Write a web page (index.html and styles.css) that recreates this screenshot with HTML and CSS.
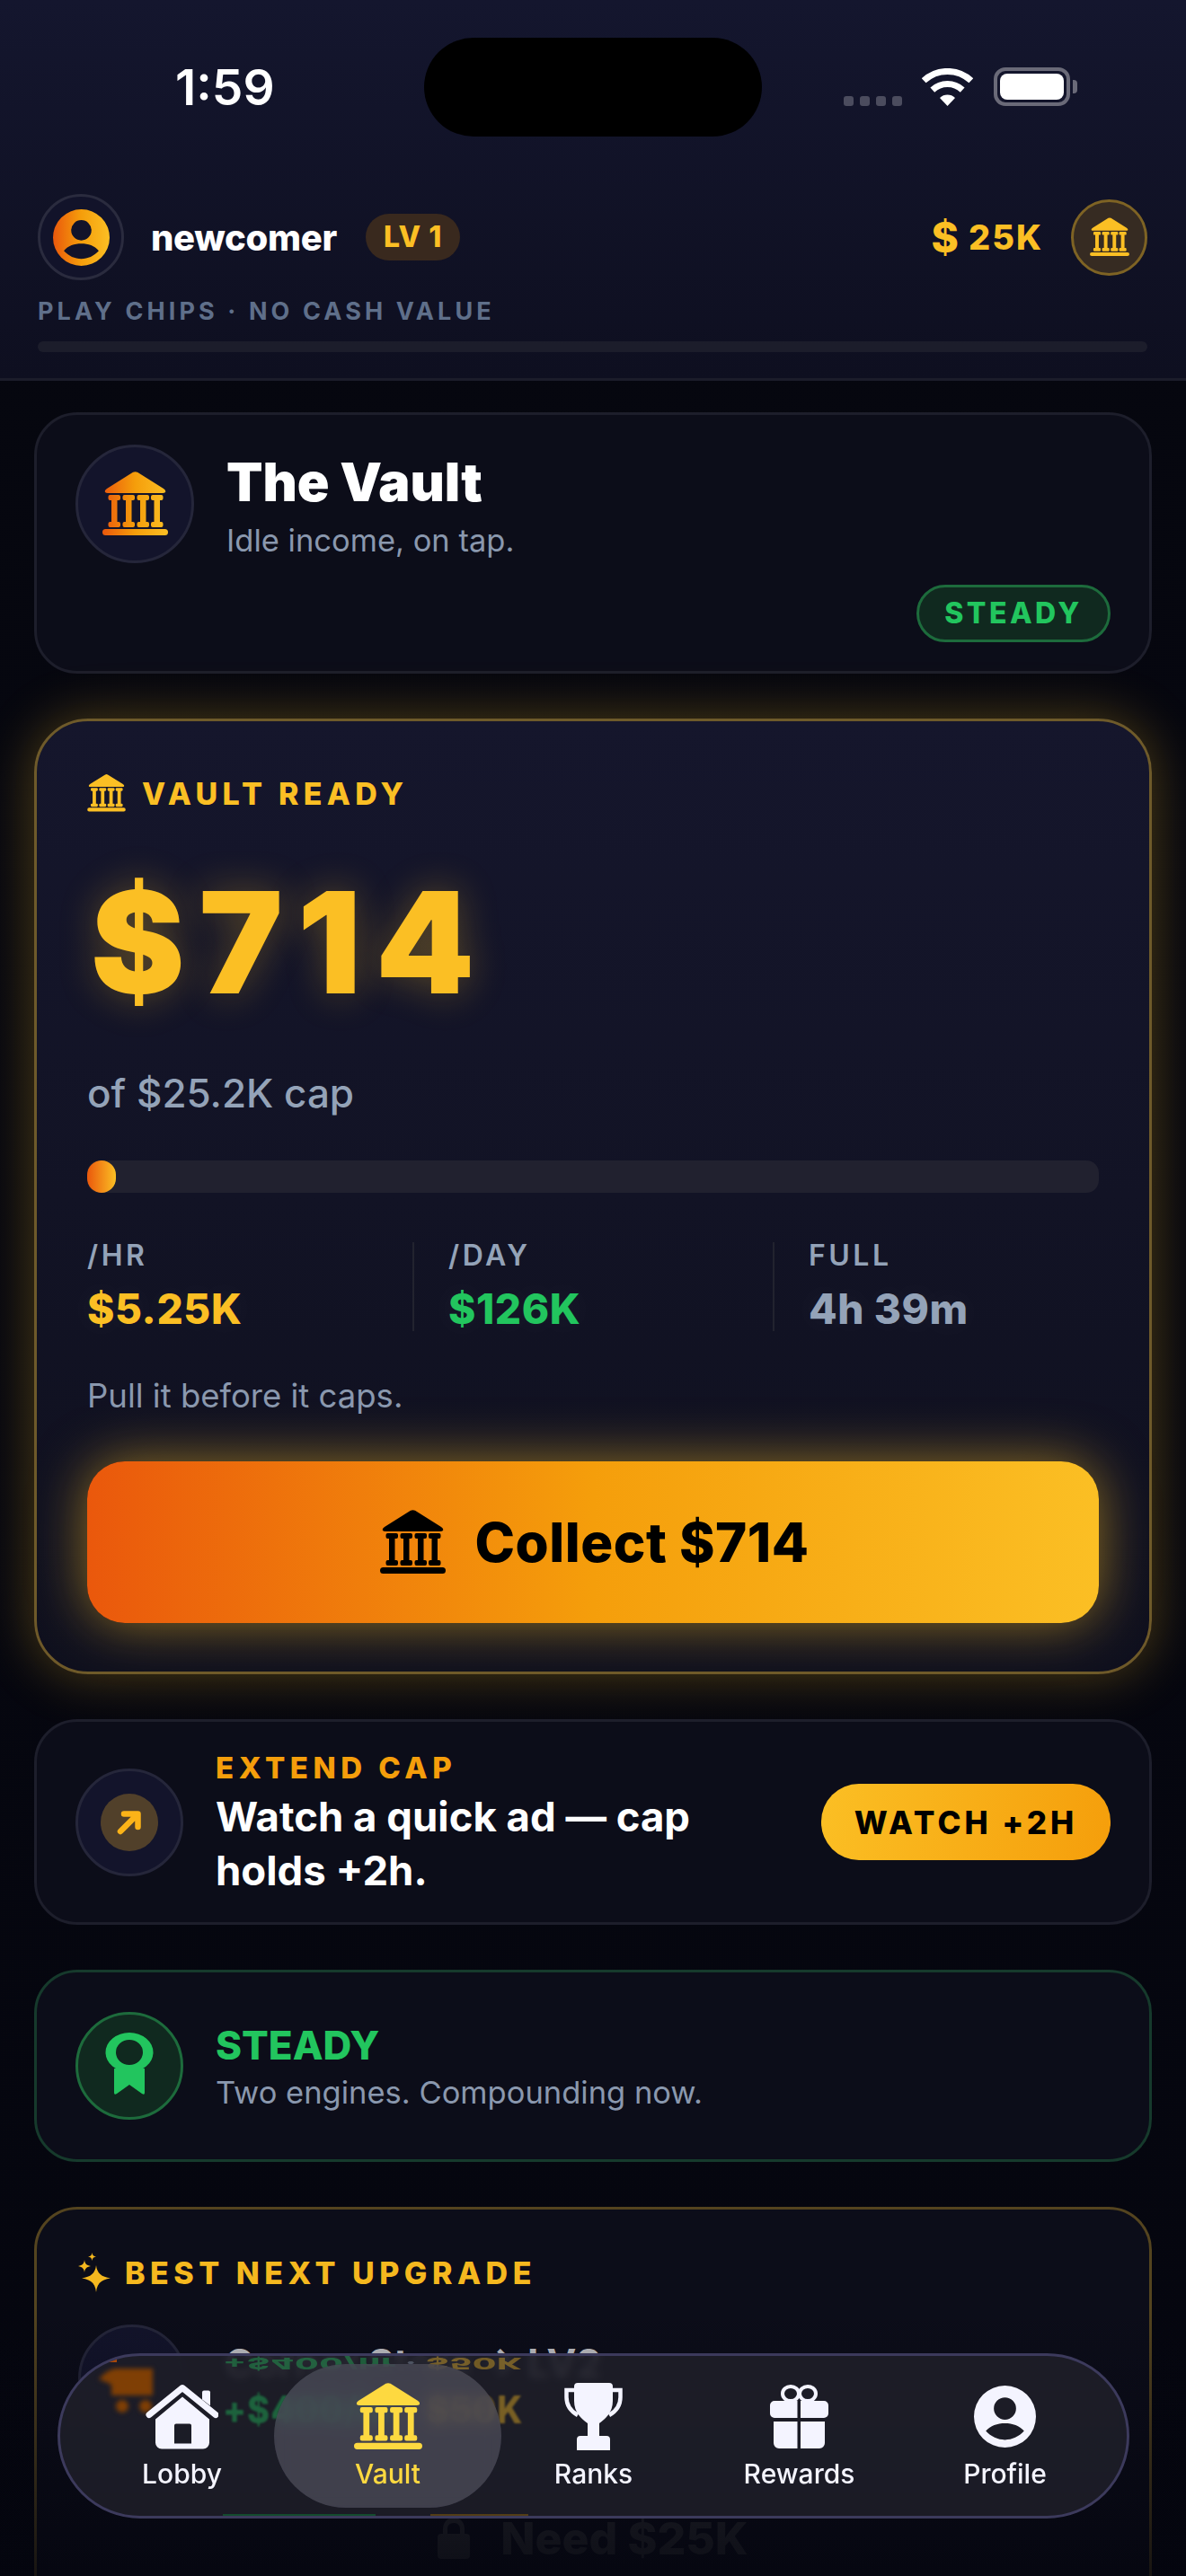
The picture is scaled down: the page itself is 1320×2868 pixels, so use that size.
FILE: index.html
```html
<!DOCTYPE html>
<html lang="en">
<head>
    <meta charset="UTF-8">
    <meta name="viewport" content="width=device-width, initial-scale=1.0">
    <title>The Vault</title>
    <link rel="stylesheet" href="styles.css">
</head>
<body>
    <svg class="defs" width="0" height="0" aria-hidden="true">
        <defs>
            <linearGradient id="amber" x1="0" y1="0" x2="1" y2="0">
                <stop offset="0" stop-color="#ea580c"/>
                <stop offset="0.5" stop-color="#f59e0b"/>
                <stop offset="1" stop-color="#fbbf24"/>
            </linearGradient>
            <symbol id="bank" viewBox="0 0 73 72">
                <path d="M34 .8Q36.5-.4 39 .8L68 19Q71 21 70 23 69 24 67 24H6Q4 24 3 23 2 21 5 19ZM6.5 28a2 2 0 0 1 2-2h9.5a2 2 0 0 1 2 2v2a2 2 0 0 1-2 2h-1.5v24h1.5a2 2 0 0 1 2 2v2a2 2 0 0 1-2 2h-9.5a2 2 0 0 1-2-2v-2a2 2 0 0 1 2-2h1.5v-24h-1.5a2 2 0 0 1-2-2zM22.5 28a2 2 0 0 1 2-2h9.5a2 2 0 0 1 2 2v2a2 2 0 0 1-2 2h-1.5v24h1.5a2 2 0 0 1 2 2v2a2 2 0 0 1-2 2h-9.5a2 2 0 0 1-2-2v-2a2 2 0 0 1 2-2h1.5v-24h-1.5a2 2 0 0 1-2-2zM38.5 28a2 2 0 0 1 2-2h9.5a2 2 0 0 1 2 2v2a2 2 0 0 1-2 2h-1.5v24h1.5a2 2 0 0 1 2 2v2a2 2 0 0 1-2 2h-9.5a2 2 0 0 1-2-2v-2a2 2 0 0 1 2-2h1.5v-24h-1.5a2 2 0 0 1-2-2zM54 28a2 2 0 0 1 2-2h9.5a2 2 0 0 1 2 2v2a2 2 0 0 1-2 2h-1.5v24h1.5a2 2 0 0 1 2 2v2a2 2 0 0 1-2 2h-9.5a2 2 0 0 1-2-2v-2a2 2 0 0 1 2-2h1.5v-24h-1.5a2 2 0 0 1-2-2zM3.5 64H69.5a3.5 3.5 0 0 1 0 7H3.5a3.5 3.5 0 0 1 0-7z"/>
            </symbol>
            <symbol id="person" viewBox="0 0 24 24">
                <path fill-rule="evenodd" d="M12 0a12 12 0 1 1 0 24 12 12 0 0 1 0-24zM12 4.6a4.3 4.3 0 1 0 0 8.6 4.3 4.3 0 0 0 0-8.6zM4.6 17.6C6.6 19.8 9.2 21 12 21s5.4-1.2 7.4-3.4C17.6 15.5 15 14.6 12 14.6s-5.600.9-7.400 3z"/>
            </symbol>
        </defs>
    </svg>

    <div class="page">
        <header class="top">
            <div class="status">
                <div class="status-left"><span class="time">1:59</span></div>
                <div class="island"></div>
                <div class="status-right">
                    <div class="signal"><i></i><i></i><i></i><i></i></div>
                    <svg class="wifi" viewBox="0 0 57 42" fill="none">
                        <path d="M2.200 13.800A38.500 38.500 0 0 1 54.800 13.800" stroke="#fff" stroke-width="7"/>
                        <path d="M11.800 24.100A24.500 24.500 0 0 1 45.200 24.100" stroke="#fff" stroke-width="7"/>
                        <path d="M28.500 42L20 32.900A12.500 12.500 0 0 1 37 32.900Z" fill="#fff"/>
                    </svg>
                    <div class="battery"><div class="battery-fill"></div></div>
                    <div class="battery-nub"></div>
                </div>
            </div>

            <div class="player-row">
                <div class="avatar">
                    <svg width="63" height="63" fill="url(#amber)"><use href="#person"/></svg>
                </div>
                <span class="player-name">newcomer</span>
                <span class="level">LV 1</span>
                <div class="balance"><span class="balance-sign">$</span><span class="balance-num">25K</span></div>
                <div class="coin">
                    <svg width="44" height="44" fill="#fbbf24"><use href="#bank"/></svg>
                </div>
            </div>
            <p class="disclaimer">PLAY CHIPS · NO CASH VALUE</p>
            <div class="xp-bar"></div>
        </header>

        <main class="feed">
            <section class="card title-card">
                <div class="title-row">
                    <div class="disc disc-large">
                        <svg width="73" height="72" fill="url(#amber)"><use href="#bank"/></svg>
                    </div>
                    <div class="title-text">
                        <h1>The Vault</h1>
                        <p>Idle income, on tap.</p>
                    </div>
                </div>
                <span class="tag-steady">STEADY</span>
            </section>

            <section class="vault-card">
                <div class="vault-label">
                    <svg width="43" height="42" fill="#fbbf24"><use href="#bank"/></svg>
                    <span>VAULT READY</span>
                </div>
                <div class="amount">$714</div>
                <div class="cap">of $25.2K cap</div>
                <div class="track"><div class="track-fill" style="width: 2.8%"></div></div>
                <div class="stats">
                    <div class="stat">
                        <div class="stat-label">/HR</div>
                        <div class="stat-value gold">$5.25K</div>
                    </div>
                    <div class="stat">
                        <div class="stat-label">/DAY</div>
                        <div class="stat-value green">$126K</div>
                    </div>
                    <div class="stat">
                        <div class="stat-label">FULL</div>
                        <div class="stat-value slate">4h 39m</div>
                    </div>
                </div>
                <p class="hint">Pull it before it caps.</p>
                <button class="collect">
                    <svg width="73" height="72" fill="#000"><use href="#bank"/></svg>
                    <span>Collect $714</span>
                </button>
            </section>

            <section class="card extend-card">
                <div class="disc">
                    <div class="arrow-dot">
                        <svg width="28" height="28" viewBox="0 0 28 28" fill="none" stroke="#fbb318" stroke-width="6.500" stroke-linecap="round" stroke-linejoin="round">
                            <path d="M4 24L22 6M8 4.500H23.500V19"/>
                        </svg>
                    </div>
                </div>
                <div class="extend-text">
                    <div class="extend-label">EXTEND CAP</div>
                    <div class="extend-copy">Watch a quick ad — cap holds +2h.</div>
                </div>
                <button class="watch">WATCH +2H</button>
            </section>

            <section class="card steady-card">
                <div class="disc disc-green">
                    <svg class="rosette" width="54" height="70" viewBox="0 0 54 70" fill="#22c55e">
                        <path fill-rule="evenodd" d="M27 0a26.500 22 0 1 1 0 44 26.500 22 0 0 1 0-44zM27 8a15 14 0 1 0 0 28 15 14 0 0 0 0-28z"/>
                        <path d="M10 40H44V67Q44 70 41 68L27 58 13 68Q10 70 10 67Z"/>
                    </svg>
                </div>
                <div class="steady-text">
                    <div class="steady-title">STEADY</div>
                    <div class="steady-sub">Two engines. Compounding now.</div>
                </div>
            </section>

            <section class="card best-card">
                <div class="best-label">
                    <svg width="36" height="44" viewBox="0 0 36 44" fill="#f5b81f">
                        <path d="M20 14C21 23 26 27 36 28.500 26 30 21 34 20 44 19 34 14 30 4 28.500 14 27 19 23 20 14Z"/>
                        <path d="M7 8C7.500 12 9 14 14 15 9 16 7.500 18 7 22 6.500 18 5 16 0 15 5 14 6.500 12 7 8Z"/>
                        <path d="M15.500 0C16 3 17 4 20 4.500 17 5 16 6 15.500 9 15 6 14 5 11 4.500 14 4 15 3 15.500 0Z"/>
                    </svg>
                    <span>BEST NEXT UPGRADE</span>
                </div>
                <div class="upgrade-row">
                    <div class="disc"></div>
                    <div class="upgrade-text">
                        <div class="upgrade-name">Corner Store → LV2</div>
                    </div>
                </div>
                <div class="locked">
                    <svg width="36" height="46" viewBox="0 0 36 46" fill="#2a2b31">
                        <path fill-rule="evenodd" d="M18 0C26 0 30 6 30 13V18H32Q36 18 36 22V42Q36 46 32 46H4Q0 46 0 42V22Q0 18 4 18H6V13C6 6 10 0 18 0ZM18 6C13 6 11 9 11 13V18H25V13C25 9 23 6 18 6Z"/>
                    </svg>
                    <span>Need $25K</span>
                </div>
            </section>
        </main>

        <div class="bottom-fade"></div>

        <nav class="tabbar">
            <!-- what the glass bends and blurs from the card below -->
            <i class="lens-chip"></i>
            <svg class="lens-cart" width="66" height="56" viewBox="0 0 66 56" fill="#7f3f05">
                <path d="M0 16Q8 6 18 4H60V34H14V22Q6 18 0 16Z"/>
                <circle cx="26" cy="46" r="7"/>
                <circle cx="52" cy="46" r="7"/>
            </svg>
            <div class="lens-text"><span class="green">+$400/hr</span> <span class="slate">·</span> <span class="gold">$50K</span></div>
            <div class="mirror"><span class="green">+$400/hr</span> <span class="slate">·</span> <span class="gold">$50K</span></div>
            <i class="lens-edge"></i>

            <a class="tab">
                <svg width="81" height="72" viewBox="0 0 81 72" fill="#f4f4ff">
                    <path fill-rule="evenodd" d="M41 14L71 39V65A7 7 0 0 1 64 72H18A7 7 0 0 1 11 65V39ZM32 46V66H51V46Q51 44 49 44H34Q32 44 32 46Z"/>
                    <path d="M63 9Q63 7 65 7H70Q72 7 72 9V24L63 17Z"/>
                    <path d="M4 34L41 4 78 34" fill="none" stroke="#f4f4ff" stroke-width="7" stroke-linecap="round" stroke-linejoin="round"/>
                </svg>
                <span>Lobby</span>
            </a>
            <a class="tab tab-active">
                <svg width="76" height="74" fill="#fdd940"><use href="#bank"/></svg>
                <span>Vault</span>
            </a>
            <a class="tab">
                <svg width="65" height="75" viewBox="0 0 65 75" fill="#f4f4ff">
                    <path d="M15 0H50A4 4 0 0 1 54 4V20C54 33 46 40 39 45V59H47A4 4 0 0 1 51 63V75H14V63A4 4 0 0 1 18 59H26V45C19 40 11 33 11 20V4A4 4 0 0 1 15 0Z"/>
                    <path d="M12 8H2.500V16C2.500 26 8 32 15 36M53 8H62.500V16C62.500 26 57 32 50 36" fill="none" stroke="#f4f4ff" stroke-width="4.500"/>
                </svg>
                <span>Ranks</span>
            </a>
            <a class="tab">
                <svg width="65" height="71" viewBox="0 0 65 71" fill="#f4f4ff">
                    <ellipse cx="23" cy="10" rx="9" ry="8" fill="none" stroke="#f4f4ff" stroke-width="4"/>
                    <ellipse cx="42" cy="10" rx="9" ry="8" fill="none" stroke="#f4f4ff" stroke-width="4"/>
                    <path d="M5 18H30.500V37H5A5 5 0 0 1 0 32V23A5 5 0 0 1 5 18ZM34 18H60A5 5 0 0 1 65 23V32A5 5 0 0 1 60 37H34Z"/>
                    <path d="M4 41H30.500V71H10A6 6 0 0 1 4 65ZM34 41H61V65A6 6 0 0 1 55 71H34Z"/>
                </svg>
                <span>Rewards</span>
            </a>
            <a class="tab">
                <svg width="69" height="69" fill="#f4f4ff"><use href="#person"/></svg>
                <span>Profile</span>
            </a>
        </nav>
    </div>
</body>
</html>
```

FILE: styles.css
```css
* {
    box-sizing: border-box;
}

body {
    margin: 0;
    background-color: #05060f;
    color: #fff;
    font-family: Inter, "Liberation Sans", sans-serif;
}

.defs {
    position: absolute;
}

.page {
    position: relative;
    width: 1320px;
    height: 2868px;
    overflow: hidden;
    background: linear-gradient(#06070f, #05060f);
}

.green { color: #22c55e; }
.gold { color: #fbbf24; }
.slate { color: #94a3b8; }

/* top bar */
.top {
    height: 424px;
    padding-top: 42px;
    background: linear-gradient(#14162e, #0e0f20);
    border-bottom: 3px solid #1b1c2a;
}

.status {
    display: grid;
    grid-template-columns: 472px 376px 472px;
    height: 174px;
}

.status-left {
    height: 110px;
    padding-left: 195px;
    display: flex;
    align-items: center;
}

.time {
    font-size: 55px;
    font-weight: 600;
}

.island {
    height: 110px;
    background-color: #000;
    border-radius: 55px;
}

.status-right {
    display: flex;
    align-items: flex-end;
    height: 76px;
    padding-left: 91px;
}

.signal {
    display: flex;
    gap: 7px;
    margin-right: 22px;
}

.signal i {
    width: 11px;
    height: 11px;
    border-radius: 3px;
    background-color: #4b4c5e;
}

.wifi {
    width: 57px;
    height: 42px;
    margin-right: 23px;
}

.battery {
    width: 85px;
    height: 43px;
    border: 4px solid #6a6a78;
    border-radius: 13px;
    padding: 3px;
}

.battery-fill {
    height: 100%;
    background-color: #fff;
    border-radius: 8px;
}

.battery-nub {
    width: 5px;
    height: 15px;
    margin: 0 0 14px 3px;
    background-color: #6a6a78;
    border-radius: 0 4px 4px 0;
}

.player-row {
    display: flex;
    align-items: center;
    height: 96px;
    padding: 0 43px 0 42px;
}

.avatar {
    width: 96px;
    height: 96px;
    display: flex;
    align-items: center;
    justify-content: center;
    background-color: #12132a;
    border: 3px solid #2a2b3e;
    border-radius: 50%;
}

.player-name {
    margin-left: 30px;
    font-size: 40px;
    font-weight: 800;
    letter-spacing: -0.3px;
}

.level {
    margin-left: 32px;
    padding: 0 20px;
    height: 52px;
    line-height: 52px;
    border-radius: 26px;
    background-color: #39291e;
    color: #fbbf24;
    font-size: 32px;
    font-weight: 800;
    letter-spacing: 1px;
}

.balance {
    margin-left: auto;
    display: flex;
    align-items: center;
    gap: 11px;
    color: #fbbf24;
    font-weight: 800;
}

.balance-sign {
    font-size: 46px;
}

.balance-num {
    font-size: 38px;
    letter-spacing: 2px;
}

.coin {
    width: 85px;
    height: 85px;
    margin-left: 31px;
    display: flex;
    align-items: center;
    justify-content: center;
    background-color: #362b22;
    border: 3px solid #7e6324;
    border-radius: 50%;
}

.disclaimer {
    margin: 18px 0 0 42px;
    height: 34px;
    line-height: 34px;
    font-size: 27px;
    font-weight: 700;
    letter-spacing: 4.100px;
    color: #5f6f8a;
}

.xp-bar {
    margin: 16px 43px 0 42px;
    height: 12px;
    border-radius: 6px;
    background-color: #1c1d2b;
}

/* cards */
.feed {
    display: flex;
    flex-direction: column;
    gap: 50px;
    padding: 35px 38px 0;
}

.card {
    background-color: #0c0d19;
    border: 3px solid #1d1e2b;
    border-radius: 48px;
}

.disc {
    flex: none;
    width: 120px;
    height: 120px;
    display: flex;
    align-items: center;
    justify-content: center;
    background-color: #13142b;
    border: 3px solid #25263a;
    border-radius: 50%;
}

.disc-large {
    width: 132px;
    height: 132px;
}

.disc-green {
    background-color: #10291f;
    border-color: #1d6b3c;
}

.rosette {
    margin-bottom: 4px;
}

.title-card {
    height: 291px;
    padding: 33px 43px 0;
    display: flex;
    flex-direction: column;
}

.title-row {
    display: flex;
    gap: 36px;
}

.title-text h1 {
    margin: 6px 0 0;
    font-size: 59px;
    line-height: 72px;
    font-weight: 900;
}

.title-text p {
    margin: 8px 0 0;
    font-size: 34.500px;
    line-height: 42px;
    color: #8a98ae;
}

.tag-steady {
    align-self: flex-end;
    margin-top: 24px;
    width: 216px;
    height: 64px;
    line-height: 58px;
    text-align: center;
    border: 3px solid #1d6b3c;
    border-radius: 32px;
    background-color: #10291f;
    color: #22c55e;
    font-size: 32px;
    font-weight: 800;
    letter-spacing: 3.500px;
}

.vault-card {
    height: 1064px;
    padding: 59px 56px 0;
    background: linear-gradient(#15162c, #0f101e);
    border: 3px solid #6e5a2a;
    border-radius: 60px;
    box-shadow: 0 0 60px rgba(251, 191, 36, 0.3);
}

.vault-label {
    display: flex;
    align-items: center;
    gap: 18px;
    height: 42px;
    color: #fbbf24;
    font-size: 34px;
    font-weight: 800;
    letter-spacing: 5.300px;
}

.amount {
    margin-top: 65px;
    padding-left: 4px;
    font-size: 157px;
    line-height: 160px;
    font-weight: 900;
    letter-spacing: 16px;
    color: #fbbf24;
    text-shadow: 0 0 44px rgba(251, 191, 36, 0.3);
}

.cap {
    margin-top: 62px;
    font-size: 44px;
    line-height: 52px;
    font-weight: 500;
    color: #94a3b8;
}

.track {
    margin-top: 49px;
    height: 36px;
    border-radius: 14px;
    overflow: hidden;
    background-color: #21212f;
}

.track-fill {
    height: 100%;
    border-radius: 18px;
    background: linear-gradient(90deg, #ea580c, #fbbf24);
}

.stats {
    display: grid;
    grid-template-columns: 362px 401px 1fr;
    margin-top: 55px;
}

.stat {
    height: 99px;
    padding-left: 38px;
    border-left: 2px solid #22232f;
}

.stat:first-child {
    padding-left: 0;
    border-left: none;
}

.stat-label {
    font-size: 32px;
    line-height: 30px;
    font-weight: 600;
    letter-spacing: 3.500px;
    color: #94a3b8;
}

.stat-value {
    margin-top: 19px;
    font-size: 46px;
    line-height: 50px;
    font-weight: 800;
    letter-spacing: 0.600px;
    text-shadow: 0 0 34px rgba(255, 255, 255, 0.07);
}

.hint {
    margin: 50px 0 0;
    font-size: 36.500px;
    line-height: 44px;
    color: #8a98ae;
}

.collect {
    display: flex;
    align-items: center;
    justify-content: center;
    gap: 32px;
    width: 100%;
    height: 180px;
    margin-top: 51px;
    padding-left: 10px;
    border: none;
    border-radius: 42px;
    background: linear-gradient(90deg, #ea580c, #f59e0b 50%, #fbbf24);
    box-shadow: 0 0 60px rgba(251, 191, 36, 0.55);
    color: #000;
    font-family: inherit;
    font-size: 60px;
    font-weight: 800;
    letter-spacing: 0.500px;
}

.extend-card {
    height: 229px;
    display: flex;
    align-items: center;
    padding: 0 43px;
    gap: 36px;
}

.extend-text {
    flex: 1;
    margin: 5px 24px 0 0;
}

.extend-label {
    font-size: 33px;
    line-height: 36px;
    font-weight: 800;
    letter-spacing: 5.500px;
    color: #f59e0b;
}

.extend-copy {
    margin-top: 7px;
    font-size: 45.500px;
    line-height: 60px;
    font-weight: 700;
}

.arrow-dot {
    width: 64px;
    height: 64px;
    display: flex;
    align-items: center;
    justify-content: center;
    border-radius: 50%;
    background-color: #51402a;
}

.watch {
    flex: none;
    width: 322px;
    height: 85px;
    border: none;
    border-radius: 42px;
    background: linear-gradient(100deg, #fbbf24, #f59e0b);
    color: #000;
    font-family: inherit;
    font-size: 35px;
    font-weight: 800;
    letter-spacing: 4px;
}

.steady-card {
    height: 214px;
    display: flex;
    align-items: center;
    padding: 0 43px;
    gap: 36px;
    border-color: #163a2c;
}

.steady-title {
    font-size: 44px;
    line-height: 54px;
    font-weight: 800;
    color: #22c55e;
}

.steady-sub {
    margin-top: 5px;
    font-size: 34.500px;
    line-height: 42px;
    color: #8a98ae;
}

.best-card {
    height: 460px;
    padding: 48px 46px 0;
    border-color: #54441f;
}

.best-label {
    display: flex;
    align-items: center;
    gap: 16px;
    height: 44px;
    color: #f5b81f;
    font-size: 34px;
    font-weight: 800;
    letter-spacing: 5.500px;
}

.upgrade-row {
    display: flex;
    gap: 43px;
    margin-top: 36px;
}

.upgrade-name {
    margin-top: 16px;
    font-size: 44px;
    line-height: 54px;
    font-weight: 700;
    color: #c4c4c8;
}

.locked {
    display: flex;
    align-items: center;
    justify-content: center;
    gap: 34px;
    margin-top: 88px;
    color: #2a2b31;
    font-size: 50px;
    font-weight: 800;
}

.bottom-fade {
    position: absolute;
    left: 0;
    right: 0;
    bottom: 0;
    height: 300px;
    background: linear-gradient(rgba(4, 5, 14, 0), rgba(4, 5, 14, 0.75));
    pointer-events: none;
}

/* tab bar */
.tabbar {
    position: absolute;
    left: 64px;
    top: 2620px;
    width: 1193px;
    height: 184px;
    display: grid;
    grid-template-columns: repeat(5, 229px);
    padding: 30px 21px 0;
    overflow: hidden;
    background-color: rgba(30, 30, 40, 0.9);
    -webkit-backdrop-filter: blur(5px);
    backdrop-filter: blur(5px);
    border: 3px solid #3c3a5c;
    border-radius: 92px;
}

.lens-chip {
    position: absolute;
    left: 45px;
    top: -1px;
    width: 18px;
    height: 8px;
    background-color: #a8480a;
}

.lens-cart {
    position: absolute;
    left: 43px;
    top: 10px;
    filter: blur(2.500px);
}

.lens-text {
    position: absolute;
    left: 181px;
    top: 35px;
    font-size: 38px;
    line-height: 50px;
    font-weight: 800;
    letter-spacing: 1px;
    opacity: 0.42;
    filter: blur(1px);
    transform: scaleY(1.1);
}

.mirror {
    position: absolute;
    left: 181px;
    top: 1px;
    font-size: 38px;
    line-height: 14px;
    font-weight: 800;
    letter-spacing: 1px;
    opacity: 0.38;
    transform: scaleY(-0.45);
    filter: blur(0.500px);
}

.lens-edge {
    position: absolute;
    left: 181px;
    bottom: 0;
    width: 340px;
    height: 2px;
    opacity: 0.5;
    background: linear-gradient(90deg, #0c7a38 0 50%, transparent 50% 68%, #8a5e08 68%);
}

.tab {
    position: relative;
    display: flex;
    flex-direction: column;
    align-items: center;
    height: 120px;
    color: #f4f4ff;
    font-size: 30px;
    line-height: 40px;
    font-weight: 500;
}

.tab svg {
    position: relative;
    flex: none;
    height: 75px;
    margin-bottom: 6px;
}

.tab span {
    position: relative;
}

.tab-active {
    color: #fdd940;
}

.tab-active::before {
    content: "";
    position: absolute;
    left: -12px;
    right: -12px;
    top: -21px;
    height: 160px;
    border-radius: 80px;
    background-color: rgba(78, 78, 92, 0.72);
    -webkit-backdrop-filter: blur(9px);
    backdrop-filter: blur(9px);
}
```
